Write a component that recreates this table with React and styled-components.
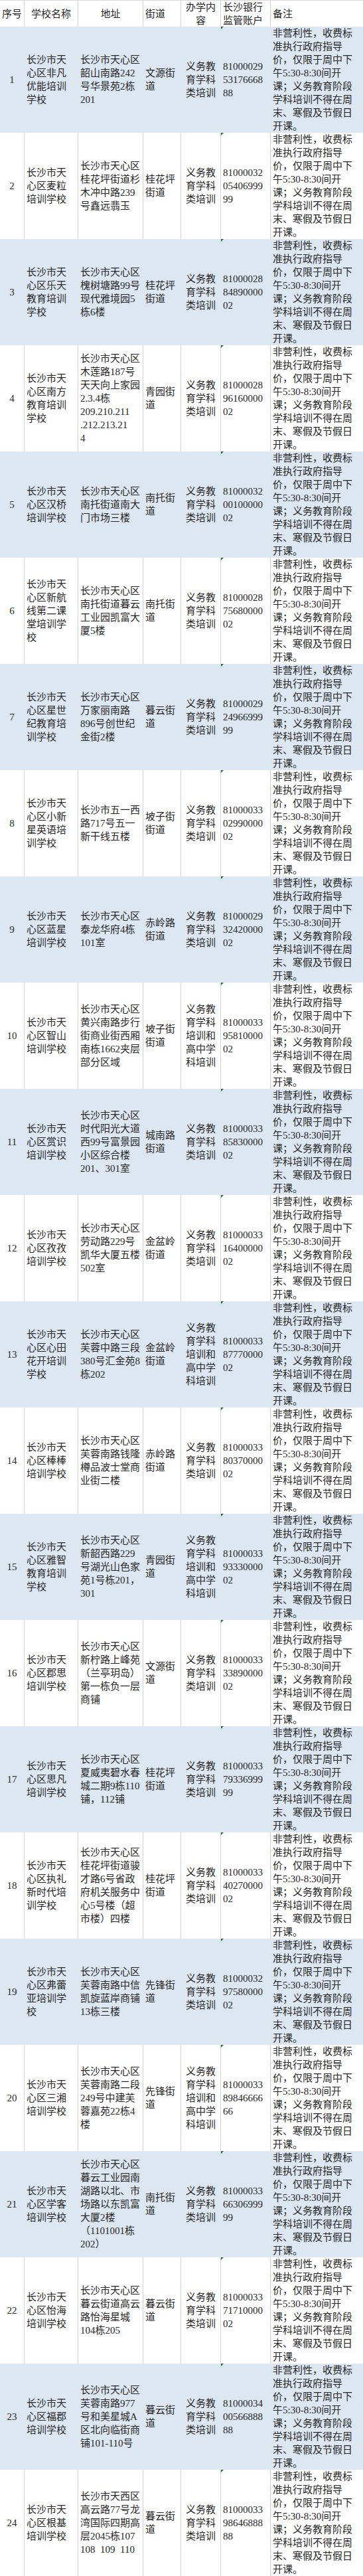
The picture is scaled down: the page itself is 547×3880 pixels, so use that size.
import React from 'react';
import styled, { createGlobalStyle, css } from 'styled-components';

const GlobalStyle = createGlobalStyle`
  body {
    margin: 0;
    background: #fff;
  }
`;

const COLS = '36px 81px 98px 57px 60px 75px 140px';

const EDU = '义务教\n育学科\n类培训';
const EDU_HIGH = '义务教\n育学科\n培训和\n高中学\n科培训';
const REMARK =
  '非营利性，收费标\n准执行政府指导\n价，仅限于周中下\n午5:30-8:30间开\n课；义务教育阶段\n学科培训不得在周\n末、寒假及节假日\n开课。';

const schools = [
  { name: '长沙市天\n心区非凡\n优能培训\n学校', addr: '长沙市天心区\n韶山南路242\n号华景苑2栋\n201', street: '文源街\n道', content: EDU, account: '81000029\n53176668\n88' },
  { name: '长沙市天\n心区麦粒\n培训学校', addr: '长沙市天心区\n桂花坪街道杉\n木冲中路239\n号鑫远翡玉', street: '桂花坪\n街道', content: EDU, account: '81000032\n05406999\n99' },
  { name: '长沙市天\n心区乐天\n教育培训\n学校', addr: '长沙市天心区\n槐树塘路99号\n现代雅境园5\n栋6楼', street: '桂花坪\n街道', content: EDU, account: '81000028\n84890000\n02' },
  { name: '长沙市天\n心区南方\n教育培训\n学校', addr: '长沙市天心区\n木莲路187号\n天天向上家园\n2.3.4栋\n209.210.211\n.212.213.21\n4', street: '青园街\n道', content: EDU, account: '81000028\n96160000\n02' },
  { name: '长沙市天\n心区汉桥\n培训学校', addr: '长沙市天心区\n南托街道南大\n门市场三楼', street: '南托街\n道', content: EDU, account: '81000032\n00100000\n02' },
  { name: '长沙市天\n心区新航\n线第二课\n堂培训学\n校', addr: '长沙市天心区\n南托街道暮云\n工业园凯富大\n厦5楼', street: '南托街\n道', content: EDU, account: '81000028\n75680000\n02' },
  { name: '长沙市天\n心区星世\n纪教育培\n训学校', addr: '长沙市天心区\n万家丽南路\n896号创世纪\n金街2楼', street: '暮云街\n道', content: EDU, account: '81000029\n24966999\n99' },
  { name: '长沙市天\n心区小新\n星英语培\n训学校', addr: '长沙市五一西\n路717号五一\n新干线五楼', street: '坡子街\n街道', content: EDU, account: '81000033\n02990000\n02' },
  { name: '长沙市天\n心区蓝星\n培训学校', addr: '长沙市天心区\n泰龙华府4栋\n101室', street: '赤岭路\n街道', content: EDU, account: '81000029\n32420000\n02' },
  { name: '长沙市天\n心区智山\n培训学校', addr: '长沙市天心区\n黄兴南路步行\n街商业街西厢\n南栋1662夹层\n部分区域', street: '坡子街\n街道', content: EDU_HIGH, account: '81000033\n95810000\n02' },
  { name: '长沙市天\n心区赏识\n培训学校', addr: '长沙市天心区\n时代阳光大道\n西99号富景园\n小区综合楼\n201、301室', street: '城南路\n街道', content: EDU, account: '81000033\n85830000\n02' },
  { name: '长沙市天\n心区孜孜\n培训学校', addr: '长沙市天心区\n劳动路229号\n凯华大厦五楼\n502室', street: '金盆岭\n街道', content: EDU, account: '81000033\n16400000\n02' },
  { name: '长沙市天\n心区心田\n花开培训\n学校', addr: '长沙市天心区\n芙蓉中路三段\n380号汇金苑8\n栋202', street: '金盆岭\n街道', content: EDU_HIGH, account: '81000033\n87770000\n02' },
  { name: '长沙市天\n心区棒棒\n培训学校', addr: '长沙市天心区\n芙蓉南路钱隆\n樽品波士堂商\n业街二楼', street: '赤岭路\n街道', content: EDU, account: '81000033\n80370000\n02' },
  { name: '长沙市天\n心区雅智\n教育培训\n学校', addr: '长沙市天心区\n新韶西路229\n号湖光山色家\n苑1号栋201，\n301', street: '青园街\n道', content: EDU_HIGH, account: '81000033\n93330000\n02' },
  { name: '长沙市天\n心区郡思\n培训学校', addr: '长沙市天心区\n新柠路上峰苑\n（兰亭玥岛）\n第一栋负一层\n商铺', street: '文源街\n道', content: EDU, account: '81000033\n33890000\n02' },
  { name: '长沙市天\n心区思凡\n培训学校', addr: '长沙市天心区\n夏威夷碧水春\n城二期9栋110\n铺，112铺', street: '桂花坪\n街道', content: EDU, account: '81000033\n79336999\n99' },
  { name: '长沙市天\n心区执礼\n新时代培\n训学校', addr: '长沙市天心区\n桂花坪街道骏\n才路6号省政\n府机关服务中\n心5号楼（超\n市楼）四楼', street: '桂花坪\n街道', content: EDU, account: '81000033\n40270000\n02' },
  { name: '长沙市天\n心区弗蕾\n亚培训学\n校', addr: '长沙市天心区\n芙蓉南路中信\n凯旋蓝岸商铺\n13栋三楼', street: '先锋街\n道', content: EDU, account: '81000032\n97580000\n02' },
  { name: '长沙市天\n心区三湘\n培训学校', addr: '长沙市天心区\n芙蓉南路二段\n249号中建芙\n蓉嘉苑22栋4\n楼', street: '先锋街\n道', content: EDU_HIGH, account: '81000033\n89846666\n66' },
  { name: '长沙市天\n心区学客\n培训学校', addr: '长沙市天心区\n暮云工业园南\n湖路以北、市\n场路以东凯富\n大厦2楼\n（1101001栋\n202）', street: '南托街\n道', content: EDU, account: '81000033\n66306999\n99' },
  { name: '长沙市天\n心区怡海\n培训学校', addr: '长沙市天心区\n暮云街道高云\n路怡海星城\n104栋205', street: '暮云街\n道', content: EDU, account: '81000033\n71710000\n02' },
  { name: '长沙市天\n心区福郡\n培训学校', addr: '长沙市天心区\n芙蓉南路977\n号和美星城A\n区北向临街商\n铺101-110号', street: '暮云街\n道', content: EDU, account: '81000034\n00566888\n88' },
  { name: '长沙市天\n心区根基\n培训学校', addr: '长沙市天西区\n高云路77号龙\n湾国际四期高\n层2045栋107\n108  109  110', street: '暮云街\n道', content: EDU, account: '81000033\n98646888\n88' },
];

const Table = styled.div`
  width: 547px;
  font-family: "Liberation Serif", "Noto Sans CJK SC", serif;
  font-size: 15px;
  line-height: 20px;
  color: #262626;
`;

const Row = styled.div`
  display: grid;
  grid-template-columns: ${COLS};
  height: ${p => (p.$head ? 40 : 160)}px;
  box-sizing: border-box;
  background: ${p => (p.$shaded ? '#dde7f2' : '#fff')};
  ${p => p.$head && css`
    border-top: 1px solid #dadada;
  `}

  & > * + * {
    border-left: 1px solid ${p => (p.$shaded ? 'transparent' : '#d2d2d2')};
  }
`;

const Cell = styled.div`
  display: flex;
  align-items: center;
  justify-content: ${p => (p.$center ? 'center' : 'flex-start')};
  text-align: ${p => (p.$center ? 'center' : 'left')};
  padding: 0 0 0 ${p => (p.$center ? 0 : 3)}px;
  white-space: pre;
  overflow: hidden;
  box-sizing: border-box;
`;

const AccountCell = styled(Cell)`
  position: relative;

  &::before {
    content: '';
    position: absolute;
    left: 0;
    top: 0;
    border-top: 4px solid #1f6b3a;
    border-right: 4px solid transparent;
  }
`;

export default function App() {
  return (
    <>
      <GlobalStyle />
      <Table>
        <Row $head>
          <Cell $center>序号</Cell>
          <Cell $center>学校名称</Cell>
          <Cell $center>地址</Cell>
          <Cell>街道</Cell>
          <Cell $center>{'办学内\n容'}</Cell>
          <Cell>{'长沙银行\n监管账户'}</Cell>
          <Cell>备注</Cell>
        </Row>
        {schools.map((s, i) => (
          <Row key={i} $shaded={i % 2 === 0}>
            <Cell $center>{i + 1}</Cell>
            <Cell>{s.name}</Cell>
            <Cell>{s.addr}</Cell>
            <Cell>{s.street}</Cell>
            <Cell $center>{s.content}</Cell>
            <AccountCell>{s.account}</AccountCell>
            <Cell>{REMARK}</Cell>
          </Row>
        ))}
      </Table>
    </>
  );
}
